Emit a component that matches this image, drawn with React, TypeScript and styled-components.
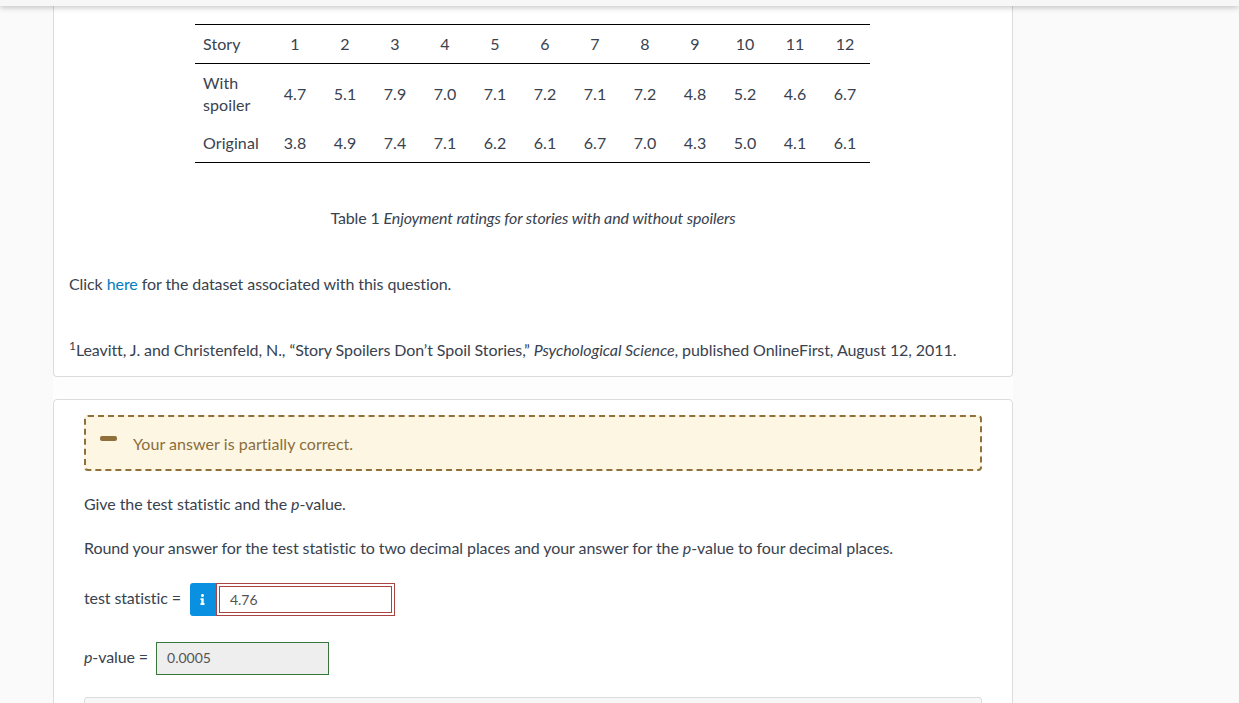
import React from "react";
import styled, { createGlobalStyle } from "styled-components";
import { FaInfo } from "react-icons/fa";

const GlobalStyle = createGlobalStyle`
  html, body {
    margin: 0;
    padding: 0;
    background: #fafafa;
    overflow: hidden;
  }
  body {
    font-family: Lato, "Liberation Sans", sans-serif;
    font-size: 16px;
    color: #39424e;
  }
`;

const Page = styled.div`
  height: 703px;
  overflow: hidden;
  position: relative;
`;

const TopBar = styled.div`
  height: 6px;
  background: #f7f7f7;
  box-shadow: 0 1px 6px rgba(0, 0, 0, 0.28);
  position: relative;
  z-index: 2;
`;

const Column = styled.div`
  width: 960px;
  margin-left: 53px;
  background: #fdfdfd;
`;

const QuestionCard = styled.section`
  height: 371px;
  box-sizing: border-box;
  padding: 18px 30px 0 15px;
  background: #fff;
  border: 1px solid #dcdcdc;
  border-top: 0;
  border-radius: 0 0 4px 4px;
  margin-bottom: 22px;
`;

const AnswerCard = styled.section`
  height: 320px;
  box-sizing: border-box;
  padding: 15px 30px 0;
  background: #fff;
  border: 1px solid #dcdcdc;
  border-radius: 4px 4px 0 0;
`;

const DataTable = styled.table`
  border-collapse: collapse;
  table-layout: fixed;
  width: 675px;
  margin-left: 126px;
  border-top: 1px solid #000;
  border-bottom: 1px solid #000;
  line-height: 22px;
`;

const Row = styled.tr<{ $head?: boolean }>`
  height: ${(p) => (p.$head ? "38px" : "auto")};
  ${(p) => (p.$head ? "border-bottom: 1px solid #000;" : "")}
`;

const LabelCell = styled.td`
  width: 75px;
  padding: 8px;
  box-sizing: border-box;
  text-align: left;
  letter-spacing: 0.08px;
`;

const ValueCell = styled.td`
  width: 50px;
  padding: 0;
  text-align: center;
`;

const Caption = styled.p`
  margin: 44px 0 0 15px;
  line-height: 22px;
  text-align: center;
  letter-spacing: -0.14px;
`;

const Paragraph = styled.p<{ $top: number }>`
  margin: ${(p) => p.$top}px 0 0;
  line-height: 22px;
  letter-spacing: -0.08px;
`;

const TextLink = styled.a`
  color: #007dbd;
  text-decoration: none;
`;

const Sup = styled.sup`
  font-size: 12px;
  line-height: 0;
`;

const Notice = styled.div`
  height: 56px;
  box-sizing: border-box;
  background: #fdf6e3;
  border: 2px dashed #8f6f3a;
  border-radius: 4px;
  color: #8a6d3b;
  display: flex;
  align-items: center;
  gap: 16px;
  padding: 0 0 0 14px;
  letter-spacing: 0.06px;
`;

const NoticeMark = styled.span`
  width: 17px;
  height: 5px;
  border-radius: 2px;
  background: #8f6f3a;
  margin-top: -10px;
`;

const AnswerRow = styled.div<{ $top: number }>`
  display: flex;
  align-items: center;
  margin-top: ${(p) => p.$top}px;
  height: 33px;
`;

const AnswerLabel = styled.span`
  letter-spacing: -0.1px;
  margin-bottom: 4px;
`;

const InfoButton = styled.span`
  width: 26px;
  height: 33px;
  margin-left: 9px;
  background: #0a90e0;
  color: #fff;
  border-radius: 3px 0 0 3px;
  display: flex;
  align-items: center;
  justify-content: center;
`;

const WrongField = styled.div`
  width: 179px;
  height: 33px;
  box-sizing: border-box;
  border: 1px solid #a94442;
  padding: 2px;
`;

const WrongInner = styled.div`
  height: 100%;
  box-sizing: border-box;
  border: 1px solid #a94442;
  padding-left: 10px;
  font-size: 14px;
  line-height: 25px;
  color: #555;
`;

const RightField = styled.div`
  width: 173px;
  height: 33px;
  margin-left: 8px;
  box-sizing: border-box;
  border: 1px solid #37763a;
  background: #eee;
  padding-left: 10px;
  font-size: 14px;
  line-height: 30px;
  color: #555;
`;

const NextBox = styled.div`
  height: 20px;
  margin-top: 22px;
  width: 898px;
  box-sizing: border-box;
  background: #f7f7f7;
  border: 1px solid #ddd;
  border-radius: 3px 3px 0 0;
`;

const withSpoiler = ["4.7", "5.1", "7.9", "7.0", "7.1", "7.2", "7.1", "7.2", "4.8", "5.2", "4.6", "6.7"];
const original = ["3.8", "4.9", "7.4", "7.1", "6.2", "6.1", "6.7", "7.0", "4.3", "5.0", "4.1", "6.1"];

export default function App() {
  return (
    <Page>
      <GlobalStyle />
      <TopBar />
      <Column>
        <QuestionCard>
          <DataTable>
            <tbody>
              <Row $head>
                <LabelCell>Story</LabelCell>
                {withSpoiler.map((_, i) => (
                  <ValueCell key={i}>{i + 1}</ValueCell>
                ))}
              </Row>
              <Row>
                <LabelCell>With spoiler</LabelCell>
                {withSpoiler.map((v, i) => (
                  <ValueCell key={i}>{v}</ValueCell>
                ))}
              </Row>
              <Row>
                <LabelCell>Original</LabelCell>
                {original.map((v, i) => (
                  <ValueCell key={i}>{v}</ValueCell>
                ))}
              </Row>
            </tbody>
          </DataTable>
          <Caption>
            Table 1 <em>Enjoyment ratings for stories with and without spoilers</em>
          </Caption>
          <Paragraph $top={44}>
            Click <TextLink href="#">here</TextLink> for the dataset associated with this question.
          </Paragraph>
          <Paragraph $top={44}>
            <Sup>1</Sup>Leavitt, J. and Christenfeld, N., “Story Spoilers Don’t Spoil Stories,” <em>Psychological Science</em>, published OnlineFirst, August 12, 2011.
          </Paragraph>
        </QuestionCard>
        <AnswerCard>
          <Notice>
            <NoticeMark />
            Your answer is partially correct.
          </Notice>
          <Paragraph $top={22}>
            Give the test statistic and the <em>p</em>-value.
          </Paragraph>
          <Paragraph $top={22}>
            Round your answer for the test statistic to two decimal places and your answer for the <em>p</em>-value to four decimal places.
          </Paragraph>
          <AnswerRow $top={24}>
            <AnswerLabel>test statistic =</AnswerLabel>
            <InfoButton>
              <FaInfo size={11} />
            </InfoButton>
            <WrongField>
              <WrongInner>4.76</WrongInner>
            </WrongField>
          </AnswerRow>
          <AnswerRow $top={26}>
            <AnswerLabel>
              <em>p</em>-value =
            </AnswerLabel>
            <RightField>0.0005</RightField>
          </AnswerRow>
          <NextBox />
        </AnswerCard>
      </Column>
    </Page>
  );
}
